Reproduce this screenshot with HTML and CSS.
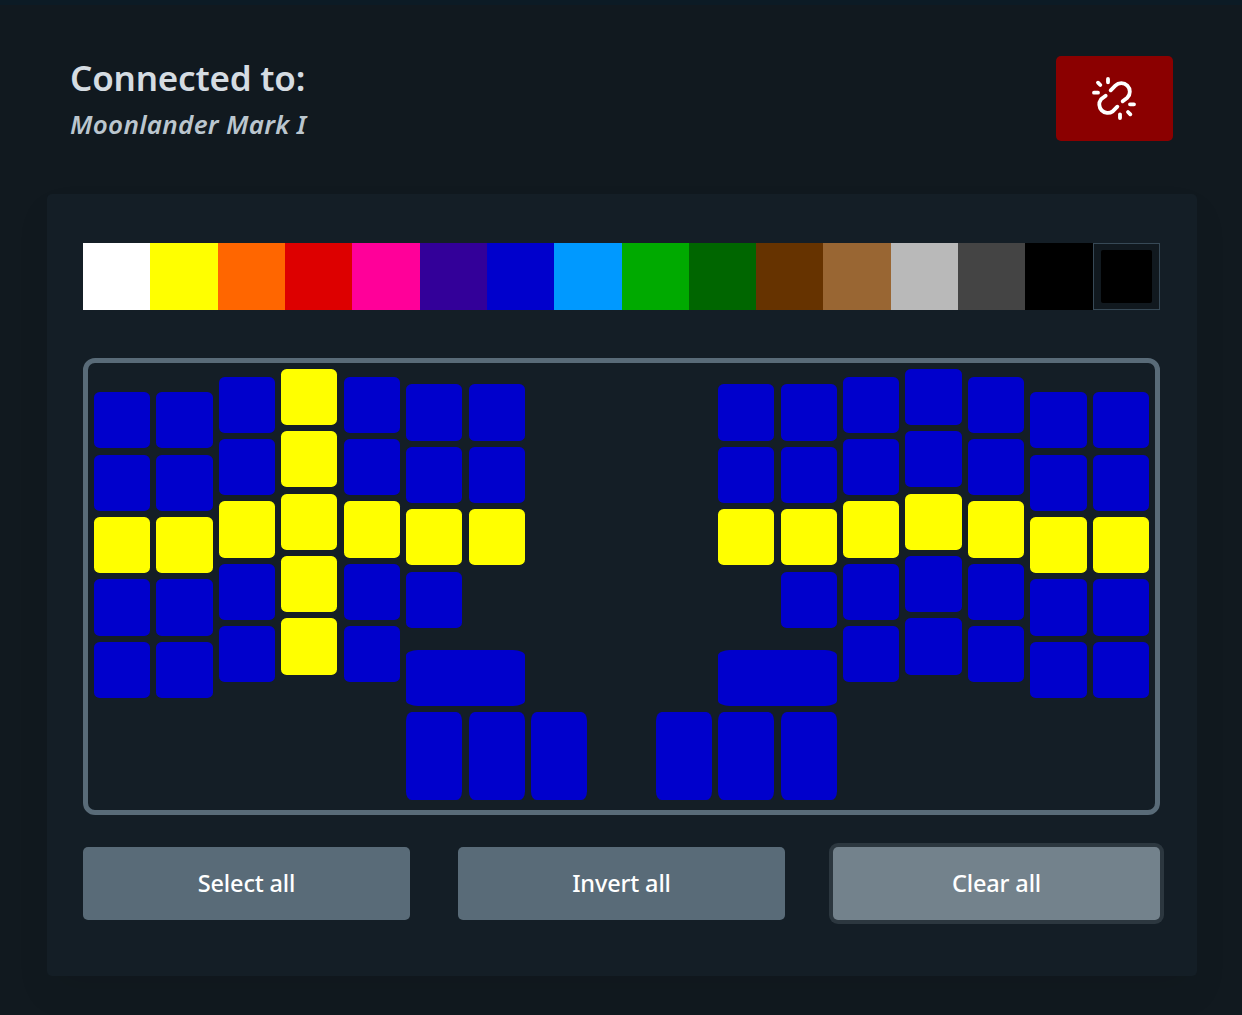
FILE: index.html
```html
<!DOCTYPE html>
<html lang="en">
<head>
<meta charset="utf-8">
<title>Keyboard colours</title>
<link rel="stylesheet" href="styles.css">
</head>
<body>
<main class="page">
  <header class="header">
    <hgroup class="titles">
      <h1 class="title">Connected to:</h1>
      <h2 class="device">Moonlander Mark I</h2>
    </hgroup>
    <button class="disconnect" aria-label="Disconnect">
      <svg class="unlink" viewBox="141 96 165 160" fill="none" stroke="currentColor" stroke-width="11.5" stroke-linecap="round" stroke-linejoin="round">
        <path d="M212 151L226 137A25.4 25.4 0 0 1 262 173L248 184"/>
        <path d="M197 167L183 178A25.4 25.4 0 0 0 218 214L232 200"/>
        <path d="M204 117V127M162 158H174M174 128L181 135M270 193H282M240 223V234M264 216L271 223"/>
      </svg>
    </button>
  </header>
  <article class="card">
    <div class="palette">
      <span class="swatch white"></span><span class="swatch yellow"></span><span class="swatch orange"></span><span class="swatch red"></span><span class="swatch pink"></span><span class="swatch purple"></span><span class="swatch blue"></span><span class="swatch sky"></span><span class="swatch green"></span><span class="swatch forest"></span><span class="swatch brown"></span><span class="swatch tan"></span><span class="swatch silver"></span><span class="swatch gray"></span><span class="swatch black"></span>
      <span class="swatch picker"><span class="picked"></span></span>
    </div>
    <div class="board">
      <div class="col c1 outer"><i class="key"></i><i class="key"></i><i class="key lit"></i><i class="key"></i><i class="key"></i></div>
      <div class="col c2 outer"><i class="key"></i><i class="key"></i><i class="key lit"></i><i class="key"></i><i class="key"></i></div>
      <div class="col c3 ring"><i class="key"></i><i class="key"></i><i class="key lit"></i><i class="key"></i><i class="key"></i></div>
      <div class="col c4 middle"><i class="key lit"></i><i class="key lit"></i><i class="key lit"></i><i class="key lit"></i><i class="key lit"></i></div>
      <div class="col c5 ring"><i class="key"></i><i class="key"></i><i class="key lit"></i><i class="key"></i><i class="key"></i></div>
      <div class="col c6 inner"><i class="key"></i><i class="key"></i><i class="key lit"></i><i class="key"></i></div>
      <div class="col c7 inner"><i class="key"></i><i class="key"></i><i class="key lit"></i></div>
      <div class="col c11 inner"><i class="key"></i><i class="key"></i><i class="key lit"></i></div>
      <div class="col c12 inner"><i class="key"></i><i class="key"></i><i class="key lit"></i><i class="key"></i></div>
      <div class="col c13 ring"><i class="key"></i><i class="key"></i><i class="key lit"></i><i class="key"></i><i class="key"></i></div>
      <div class="col c14 middle"><i class="key"></i><i class="key"></i><i class="key lit"></i><i class="key"></i><i class="key"></i></div>
      <div class="col c15 ring"><i class="key"></i><i class="key"></i><i class="key lit"></i><i class="key"></i><i class="key"></i></div>
      <div class="col c16 outer"><i class="key"></i><i class="key"></i><i class="key lit"></i><i class="key"></i><i class="key"></i></div>
      <div class="col c17 outer"><i class="key"></i><i class="key"></i><i class="key lit"></i><i class="key"></i><i class="key"></i></div>
      <div class="thumb thumb-left"><i class="key wide"></i><i class="key tall"></i><i class="key tall"></i><i class="key tall"></i></div>
      <div class="thumb thumb-right"><i class="key wide"></i><i class="key tall"></i><i class="key tall"></i><i class="key tall"></i></div>
    </div>
    <div class="actions">
      <button class="action">Select all</button>
      <button class="action">Invert all</button>
      <button class="action active">Clear all</button>
    </div>
  </article>
</main>
</body>
</html>
```
FILE: styles.css
```css
* { box-sizing: border-box; }
body {
  margin: 0;
  background: #11191f;
  font-family: "Noto Sans", "Open Sans", sans-serif;
}
button { font: inherit; border: 0; padding: 0; }
.page {
  height: 1015px;
  border-top: 5px solid #0c1b25;
  padding: 51px 45px 0 47px;
  overflow: hidden;
}
.header {
  display: flex;
  justify-content: space-between;
  height: 138px;
  padding: 0 24px 0 23px;
}
.titles { margin: 0; }
.title {
  margin: 0;
  font-size: 35px;
  line-height: 44px;
  font-weight: 600;
  letter-spacing: -0.2px;
  color: #d5dce2;
}
.device {
  margin: 0;
  font-size: 26px;
  line-height: 48px;
  font-weight: 600;
  font-style: italic;
  letter-spacing: 0.3px;
  color: #bbc6ce;
}
.disconnect {
  display: flex;
  align-items: center;
  justify-content: center;
  width: 117px;
  height: 85px;
  border-radius: 5px;
  background: #8b0000;
  color: #fff;
}
.unlink { width: 55px; height: 53.33px; }
.card {
  height: 782px;
  padding: 49px 37px 0 36px;
  border-radius: 5px;
  background: #141e26;
  box-shadow: 0 18px 36px rgba(0, 0, 0, 0.06);
}
.palette {
  display: grid;
  grid-template-columns: repeat(16, 1fr);
  height: 67px;
  margin-bottom: 48px;
}
.white { background: #fff; }
.yellow { background: #ff0; }
.orange { background: #f60; }
.red { background: #d00; }
.pink { background: #f09; }
.purple { background: #309; }
.blue { background: #00c; }
.sky { background: #09f; }
.green { background: #0a0; }
.forest { background: #060; }
.brown { background: #630; }
.tan { background: #963; }
.silver { background: #b9b9b9; }
.gray { background: #444; }
.black { background: #000; }
.picker {
  display: flex;
  padding: 6px 7px;
  border: 1px solid #374956;
  background: #11191f;
}
.picked { flex: 1; border-radius: 2px; background: #000; }
.board {
  display: grid;
  grid-template-columns: repeat(17, 56.19px);
  grid-template-rows: 437px;
  column-gap: 6.24px;
  height: 457px;
  padding: 0 6px;
  border: 5px solid #596b78;
  border-radius: 12px;
}
.col {
  grid-row: 1;
  display: flex;
  flex-direction: column;
  gap: 6.24px;
}
.outer { padding-top: 29.1px; }
.ring { padding-top: 13.6px; }
.middle { padding-top: 5.8px; }
.inner { padding-top: 21.4px; }
.key {
  flex: none;
  height: 56.2px;
  border-radius: 10%;
  background: #00c;
}
.lit { background: #ff0; }
.c1 { grid-column: 1; }
.c2 { grid-column: 2; }
.c3 { grid-column: 3; }
.c4 { grid-column: 4; }
.c5 { grid-column: 5; }
.c6 { grid-column: 6; }
.c7 { grid-column: 7; }
.c11 { grid-column: 11; }
.c12 { grid-column: 12; }
.c13 { grid-column: 13; }
.c14 { grid-column: 14; }
.c15 { grid-column: 15; }
.c16 { grid-column: 16; }
.c17 { grid-column: 17; }
.thumb {
  grid-row: 1;
  align-self: end;
  display: grid;
  grid-template-columns: repeat(3, 56.19px);
  gap: 6.24px;
}
.thumb-left { grid-column: 6 / 9; }
.thumb-right { grid-column: 10 / 13; }
.thumb-left .wide { grid-column: 1 / 3; }
.thumb-right .wide { grid-column: 2 / 4; }
.thumb .tall { grid-row: 2; height: 87.8px; }
.actions {
  display: grid;
  grid-template-columns: repeat(3, 1fr);
  gap: 48px;
  margin-top: 32px;
}
.action {
  height: 73px;
  padding-bottom: 2px;
  border-radius: 5px;
  background: #596b78;
  color: #fff;
  font-size: 23.5px;
  font-weight: 500;
  letter-spacing: -0.15px;
}
.active {
  background: #73828c;
  box-shadow: 0 0 0 4px rgba(115, 130, 140, 0.25);
}
```
